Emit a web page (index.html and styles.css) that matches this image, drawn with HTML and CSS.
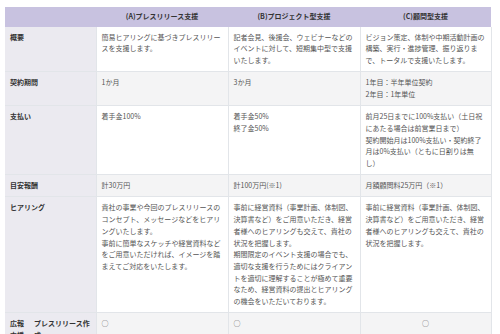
FILE: index.html
```html
<!DOCTYPE html>
<html lang="ja">
<head>
<meta charset="utf-8">
<link rel="stylesheet" href="styles.css">
</head>
<body>
<table class="plan">
  <colgroup>
    <col class="c-l1"><col class="c-l2"><col class="c-a"><col class="c-b"><col class="c-c">
  </colgroup>
  <thead>
    <tr>
      <th colspan="2"></th>
      <th>(A)プレスリリース支援</th>
      <th>(B)プロジェクト型支援</th>
      <th>(C)顧問型支援</th>
    </tr>
  </thead>
  <tbody>
    <tr>
      <th colspan="2" class="lbl">概要</th>
      <td>簡易ヒアリングに基づきプレスリリースを支援します。</td>
      <td>記者会見、後援会、ウェビナーなどのイベントに対して、短期集中型で支援いたします。</td>
      <td>ビジョン策定、体制や中期活動計画の構築、実行・進捗管理、振り返りまで、トータルで支援いたします。</td>
    </tr>
    <tr class="alt">
      <th colspan="2" class="lbl">契約期間</th>
      <td>1か月</td>
      <td>3か月</td>
      <td>1年目：半年単位契約<br>2年目：1年単位</td>
    </tr>
    <tr>
      <th colspan="2" class="lbl">支払い</th>
      <td>着手金100%</td>
      <td>着手金50%<br>終了金50%</td>
      <td>前月25日までに100%支払い（土日祝にあたる場合は前営業日まで）<br>契約開始月は100%支払い・契約終了月は0%支払い（ともに日割りは無<br>し）</td>
    </tr>
    <tr class="alt">
      <th colspan="2" class="lbl">目安報酬</th>
      <td>計30万円</td>
      <td>計100万円(※1)</td>
      <td>月額顧問料25万円（※1）</td>
    </tr>
    <tr>
      <th colspan="2" class="lbl">ヒアリング</th>
      <td>貴社の事業や今回のプレスリリースのコンセプト、メッセージなどをヒアリングいたします。<br>事前に簡単なスケッチや経営資料などをご用意いただければ、イメージを踏まえてご対応をいたします。</td>
      <td>事前に経営資料（事業計画、体制図、決算書など）をご用意いただき、経営者様へのヒアリングも交えて、貴社の状況を把握します。<br>期間限定のイベント支援の場合でも、適切な支援を行うためにはクライアントを適切に理解することが極めて重要なため、経営資料の提出とヒアリングの機会をいただいております。</td>
      <td>事前に経営資料（事業計画、体制図、決算書など）をご用意いただき、経営者様へのヒアリングも交えて、貴社の状況を把握します。</td>
    </tr>
    <tr class="alt">
      <th rowspan="2" class="lbl">広報支援</th>
      <th class="lbl">プレスリリース作成</th>
      <td>○</td>
      <td>○</td>
      <td class="center">○</td>
    </tr>
  </tbody>
</table>
</body>
</html>
```

FILE: styles.css
```css
html, body {
  margin: 0;
  padding: 0;
  background: #ffffff;
}

body {
  padding: 7px 0 0 5px;
  font-family: "Noto Sans CJK JP", "Noto Sans", sans-serif;
  font-size: 7px;
  line-height: 11.7px;
  color: #555;
}

.plan {
  border-collapse: collapse;
  table-layout: fixed;
  width: 486px;
}

.c-l1 { width: 24px; }
.c-l2 { width: 67px; }
.c-a { width: 132px; }
.c-b { width: 132px; }
.c-c { width: 131px; }

.plan th,
.plan td {
  padding: 5px 5px 4.5px;
  vertical-align: top;
  text-align: left;
  border-bottom: 1px solid #e2e5e9;
  word-break: break-all;
}

.plan thead th {
  background: #c8c2e0;
  color: #333;
  font-weight: bold;
  text-align: center;
  padding: 4px 5px;
  border-bottom: none;
}

.plan th.lbl {
  background: #ebeaf0;
  color: #333;
  font-weight: bold;
}

.plan td {
  border-left: 1px solid #e2e5e9;
}

.plan td:last-child {
  border-right: 1px solid #e2e5e9;
}

.plan tr.alt td {
  background: #f4f4f5;
}

.plan td.center {
  text-align: center;
}
```
